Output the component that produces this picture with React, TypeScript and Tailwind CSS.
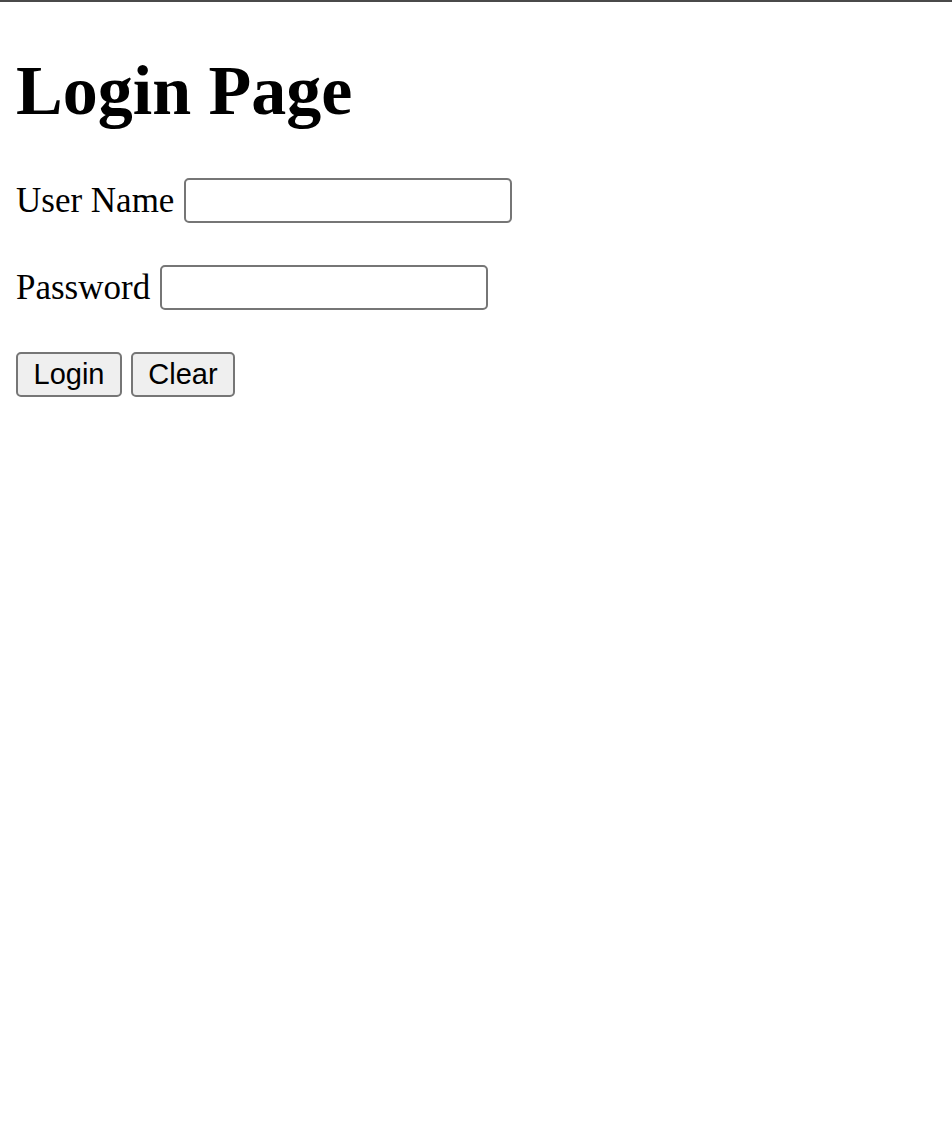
export default function App() {
  return (
    <div className="min-h-screen w-full bg-white border-t-2 border-[#4a4a4a] text-black">
      <div className="pl-4 flex flex-col items-start">
        <h1 className="mt-[50px] mb-[48px] text-[70px] leading-[78px] font-bold font-['Liberation_Serif',serif]">
          Login Page
        </h1>

        <div className="flex items-center h-[45px]">
          <label className="text-[35px] leading-[45px] font-['Liberation_Serif',serif]">User Name</label>
          <input
            type="text"
            className="ml-[10px] w-[328px] h-[45px] border-2 border-[#767676] rounded-[5px] bg-white outline-none"
          />
        </div>

        <div className="mt-[42px] flex items-center h-[45px]">
          <label className="text-[35px] leading-[45px] font-['Liberation_Serif',serif]">Password</label>
          <input
            type="password"
            className="ml-[10px] w-[328px] h-[45px] border-2 border-[#767676] rounded-[5px] bg-white outline-none"
          />
        </div>

        <div className="mt-[42px] flex items-center gap-[9px]">
          <button className="w-[106px] h-[45px] bg-[#efefef] border-2 border-[#767676] rounded-[5px] text-[29px] leading-none font-['Liberation_Sans',Arial,sans-serif]">
            Login
          </button>
          <button className="w-[104px] h-[45px] bg-[#efefef] border-2 border-[#767676] rounded-[5px] text-[29px] leading-none font-['Liberation_Sans',Arial,sans-serif]">
            Clear
          </button>
        </div>
      </div>
    </div>
  );
}
